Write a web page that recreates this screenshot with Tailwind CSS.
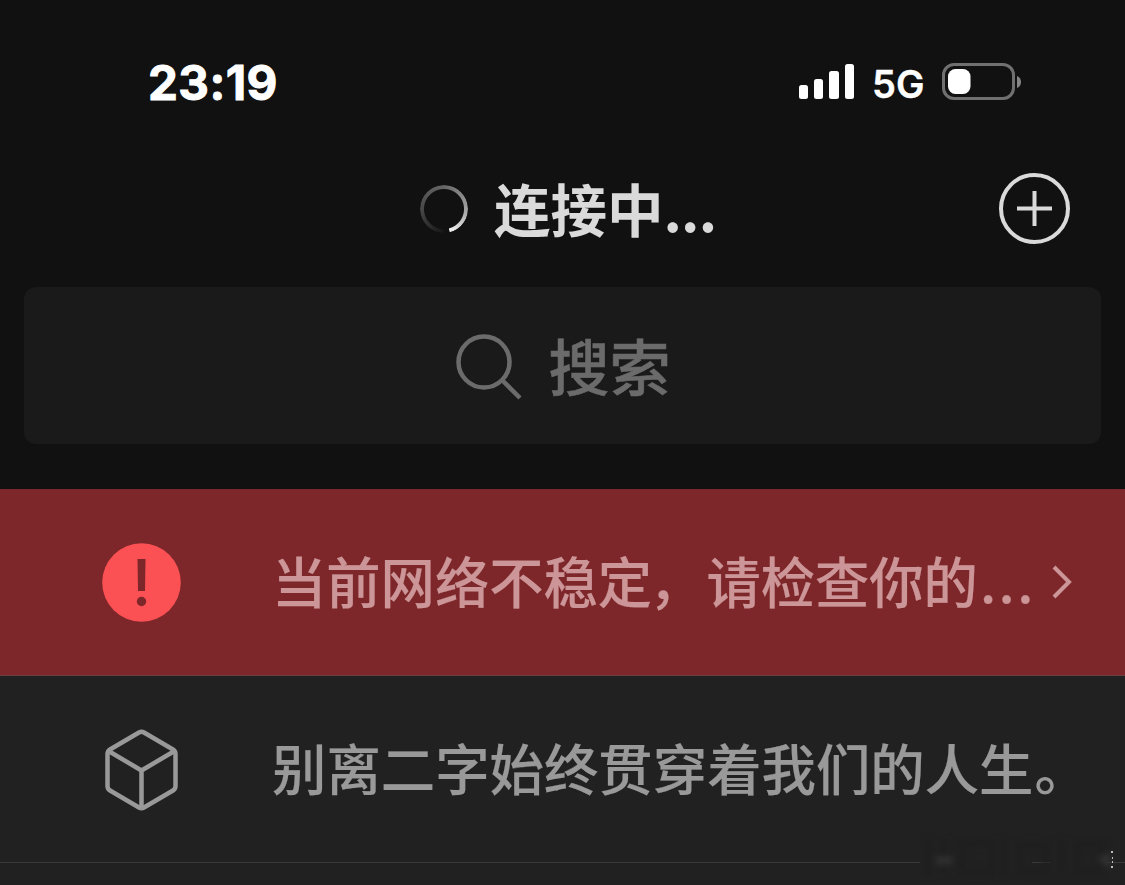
<!DOCTYPE html>
<html lang="zh-CN">
<head>
    <meta charset="UTF-8">
    <meta name="viewport" content="width=device-width, initial-scale=1.0">
    <title>连接中...</title>
    <script src="https://cdn.jsdelivr.net/npm/@tailwindcss/browser@4"></script>
</head>
<body class="bg-[#111111] font-['Noto_Sans_CJK_SC',sans-serif] overflow-hidden">
    <div class="relative w-[1125px] h-[885px] flex flex-col overflow-hidden">
        <!-- Status bar -->
        <div class="h-[132px] shrink-0 pt-[32px] pl-[148px] pr-[103px] flex items-center justify-between text-white">
            <span class="mt-[2px] font-['Inter',sans-serif] font-bold text-[47.500px] leading-none tracking-[0.400px] [-webkit-text-stroke:0.900px_#fff]">23:19</span>
            <div class="flex items-center">
                <svg class="w-[56px] h-[36px]" viewBox="0 0 56 36" fill="currentColor">
                    <rect x="0" y="21" width="9" height="14" rx="2.5" />
                    <rect x="15" y="15" width="9" height="20" rx="2.5" />
                    <rect x="30" y="7" width="10" height="28" rx="2.5" />
                    <rect x="46" y="0" width="9" height="35" rx="2.5" />
                </svg>
                <span class="ml-[17px] mt-[3px] w-[51px] font-['Inter',sans-serif] font-semibold text-[38px] leading-none whitespace-nowrap [-webkit-text-stroke:0.400px_#fff]">5G</span>
                <svg class="ml-[19px] w-[80px] h-[38px]" viewBox="0 0 80 38">
                    <rect x="1.5" y="1.5" width="70" height="34" rx="10.5" fill="none" stroke="#707070" stroke-width="3" />
                    <rect x="6" y="6" width="22.5" height="25" rx="7.5" fill="#fff" />
                    <path d="M75 13c3 1 4 3.500 4 6s-1 5-4 6z" fill="#858585" />
                </svg>
            </div>
        </div>

        <!-- Title bar -->
        <header class="h-[155px] shrink-0 pl-[420px] pr-[55px] flex items-start justify-between text-[#dadada]">
            <div class="flex items-center h-[154px]">
                <div class="size-[48px] rounded-full bg-[conic-gradient(from_180deg,#161616_0deg,#484848_90deg,#666666_180deg,#a0a0a0_270deg,#e8e8e8_335deg,#efefef_345deg,transparent_347deg)] [mask:radial-gradient(circle,transparent_19.500px,#000_20.500px)]"></div>
                <h1 class="ml-[26px] mb-[4px] text-[56.500px] leading-none font-bold whitespace-nowrap">连接中<span class="tracking-[-0.800px]">...</span></h1>
            </div>
            <svg class="mt-[41px] size-[71px]" viewBox="0 0 71 71" fill="none" stroke="currentColor" stroke-width="4">
                <circle cx="35.500" cy="35.500" r="33.500" />
                <path d="M35.500 18v35M18 35.500h35" />
            </svg>
        </header>

        <!-- Search box -->
        <div class="mx-[24px] h-[157px] shrink-0 rounded-[12px] bg-[#1a1a1a] pl-[2px] flex items-center justify-center text-[#6b6b6b]">
            <svg class="mt-[3px] w-[66px] h-[66px]" viewBox="0 0 66 66" fill="none" stroke="currentColor" stroke-width="4.500">
                <circle cx="28" cy="28" r="25.500" />
                <path d="M46 46l18 18" />
            </svg>
            <span class="ml-[26px] mb-[2px] text-[61px] leading-none font-medium [-webkit-text-stroke:0.500px_#6b6b6b]">搜索</span>
        </div>

        <!-- Network warning -->
        <div class="mt-[45px] h-[187px] shrink-0 pl-[102px] pr-[53px] bg-[#7d272a] border-b border-[#6a4042] flex items-center text-[#cc9698]">
            <svg class="size-[79px] shrink-0" viewBox="0 0 79 79">
                <circle cx="39.500" cy="39.500" r="39.300" fill="#fc5154" />
                <path d="M35.500 16h8l-.5 32h-7z" fill="#7d272a" />
                <circle cx="39.500" cy="58.500" r="4.700" fill="#7d272a" />
            </svg>
            <span class="ml-[91px] mb-[4px] text-[54.300px] leading-none font-medium whitespace-nowrap [-webkit-text-stroke:0.200px_#cc9698]">当前网络不稳定<span class="-ml-[3px] mr-[3px]">，</span>请检查你的<span class="ml-[2px] tracking-[2.500px]">...</span></span>
            <svg class="ml-auto w-[20px] h-[34px] shrink-0" viewBox="0 0 20 34" fill="none" stroke="currentColor" stroke-width="4">
                <path d="M2 2l15 15L2 32" />
            </svg>
        </div>

        <!-- Message row -->
        <div class="h-[187px] shrink-0 pl-[105px] bg-[#212121] border-b border-[#3a3a3a] flex items-center text-[#999999]">
            <svg class="mt-[2px] w-[73px] h-[82px] shrink-0" viewBox="0 0 73 82" fill="none" stroke="currentColor" stroke-width="4.500" stroke-linejoin="round">
                <path d="M34 3.500Q36.500 2 39 3.500L68 20.500Q70.500 22 70.500 25V57Q70.500 60 68 61.500L39 78.500Q36.500 80 34 78.500L5 61.500Q2.500 60 2.500 57V25Q2.500 22 5 20.500Z" />
                <path d="M3.500 22L36.500 41.500L69.500 22M36.500 41.500V79" />
            </svg>
            <span class="ml-[94px] mb-[3px] text-[54.400px] leading-none font-medium whitespace-nowrap [-webkit-text-stroke:0.200px_#999999]">别离二字始终贯穿着我们的人生<span class="ml-[1px]">。</span></span>
        </div>
        <div class="flex-1 bg-[#212121]"></div>

        <!-- Faded mark over the divider -->
        <svg class="absolute right-0 bottom-0 w-[205px] h-[52px]" viewBox="0 0 205 52">
            <rect x="0" y="28" width="112" height="3" fill="#212121" />
            <rect x="130" y="28" width="55" height="3" fill="#212121" />
            <g class="blur-[3px]">
                <path d="M8 8v34M24 6v34M42 10h30v30H42zM84 8v34M100 12h26v26h-26zM142 8v32M158 10h24v28h-24z" fill="none" stroke="#1e1e1e" stroke-width="5" />
                <path d="M16 24h16v7H16zM178 25l12-6v18z" fill="#333333" />
            </g>
            <path d="M191 18h2v2h-2zM192 24h1v2h-1zM192 28h1v2h-1zM191 33h2v2h-2z" fill="#bbbbbb" />
        </svg>
    </div>
</body>
</html>
